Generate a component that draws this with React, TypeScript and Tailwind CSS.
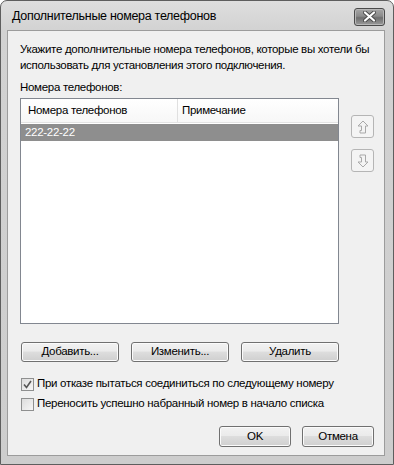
const font = { fontFamily: '"Liberation Sans", Arial, sans-serif' };
const txt = "text-[11.5px] tracking-[-0.3px] whitespace-nowrap";

function ArrowUp() {
  return (
    <svg width="12" height="14" viewBox="0 0 12 14" fill="none">
      <path d="M6 1 L11 6 L8.5 6 L8.5 13 L3 13 L3 10.5 L4.5 10.5 L4.5 6 L1 6 Z" stroke="#a9a9a9" strokeWidth="1" strokeLinejoin="miter" />
    </svg>
  );
}

function ArrowDown() {
  return (
    <svg width="12" height="14" viewBox="0 0 12 14" fill="none">
      <path d="M6 13 L11 8 L8.5 8 L8.5 1 L3 1 L3 3.5 L4.5 3.5 L4.5 8 L1 8 Z" stroke="#a9a9a9" strokeWidth="1" strokeLinejoin="miter" />
    </svg>
  );
}

function Btn({ label, w }: { label: string; w: string }) {
  return (
    <div
      className={`${w} ${txt} flex items-center justify-center rounded-[3px] border border-[#707070] text-black shadow-[inset_0_0_0_1px_#fbfbfb]`}
      style={{ background: "linear-gradient(#f2f2f2 0%, #ebebeb 45%, #dddddd 50%, #cfcfcf 100%)" }}
    >
      {label}
    </div>
  );
}

function Check({ checked, label }: { checked: boolean; label: string }) {
  return (
    <div className="flex h-[16px] items-center">
      <div
        className="ml-[1px] flex h-[13px] w-[13px] items-center justify-center border border-[#8e8f8f]"
        style={{ background: "linear-gradient(135deg, #dcdcdc, #f6f6f6)" }}
      >
        {checked ? (
          <svg width="9" height="9" viewBox="0 0 9 9">
            <path d="M1 4.5 L3.5 7.5 L8 1" stroke="#555" strokeWidth="1.6" fill="none" />
          </svg>
        ) : null}
      </div>
      <span className={`ml-[3px] ${txt} text-black`}>{label}</span>
    </div>
  );
}

export default function App() {
  return (
    <div className="h-[465px] w-[394px] bg-white" style={font}>
      <div
        className="flex h-[465px] w-[394px] flex-col rounded-t-[7px] border border-[#5e5e5e] pb-[8px] pl-[6px] pr-[8px]"
        style={{ background: "linear-gradient(#dedede 0px, #d2d2d2 30px, #cdcdcd 100%)" }}
      >
        <div className="flex h-[29px] items-center justify-between pl-[5px]">
          <span className="mt-[1px] whitespace-nowrap text-[12.5px] tracking-[-0.3px] text-black">Дополнительные номера телефонов</span>
          <div
            className="mt-[2px] flex h-[18px] w-[31px] items-center justify-center rounded-[3px] border border-[#4a4a4a] shadow-[inset_0_0_0_1px_#b8b8b8]"
            style={{ background: "linear-gradient(#a6a6a6 0%, #8a8a8a 45%, #6e6e6e 55%, #9a9a9a 100%)" }}
          >
            <svg width="13" height="11" viewBox="0 0 13 11">
              <path d="M2 1.5 L11 9.5 M11 1.5 L2 9.5" stroke="#4a4a4a" strokeWidth="4" strokeLinecap="round" />
              <path d="M2 1.5 L11 9.5 M11 1.5 L2 9.5" stroke="#ffffff" strokeWidth="2.2" strokeLinecap="round" />
            </svg>
          </div>
        </div>
        <div className="flex flex-1 flex-col border border-[#9c9c9c] bg-[#f0f0f0] pl-[12px] pt-[10px]">
          <p className={`${txt} leading-[16px] text-black`}>
            Укажите дополнительные номера телефонов, которые вы хотели бы
            <br />
            использовать для установления этого подключения.
          </p>
          <p className={`mt-[6px] ${txt} leading-[16px] text-black`}>Номера телефонов:</p>
          <div className="mt-[3px] flex">
            <div className="flex h-[226px] w-[319px] flex-col border border-[#828790] bg-white">
              <div className={`flex h-[24px] border-b border-[#e3e3e3] ${txt} text-black`} style={{ background: "linear-gradient(#ffffff, #f7f7f7)" }}>
                <div className="flex w-[157px] items-center border-r border-[#e0e0e0] pl-[7px]">Номера телефонов</div>
                <div className="flex items-center pl-[4px]">Примечание</div>
              </div>
              <div className={`mt-[1px] flex h-[17px] items-center bg-[#8e8e8e] pl-[4px] ${txt} text-white`}>222-22-22</div>
            </div>
            <div className="ml-[12px] flex flex-col gap-[11px] pt-[17px]">
              <div className="flex h-[23px] w-[23px] items-center justify-center rounded-[3px] border border-[#b5b5b5] bg-[#f4f4f4]">
                <ArrowUp />
              </div>
              <div className="flex h-[23px] w-[23px] items-center justify-center rounded-[3px] border border-[#b5b5b5] bg-[#f4f4f4]">
                <ArrowDown />
              </div>
            </div>
          </div>
          <div className="ml-[1px] mt-[18px] flex gap-[12px]">
            <Btn label="Добавить..." w="w-[98px] h-[20px]" />
            <Btn label="Изменить..." w="w-[98px] h-[20px]" />
            <Btn label="Удалить" w="w-[98px] h-[20px]" />
          </div>
          <div className="mt-[14px]">
            <Check checked label="При отказе пытаться соединиться по следующему номеру" />
          </div>
          <div className="mt-[4px]">
            <Check checked={false} label="Переносить успешно набранный номер в начало списка" />
          </div>
          <div className="mr-[10px] mt-[14px] flex justify-end gap-[11px]">
            <Btn label="OK" w="w-[72px] h-[21px]" />
            <Btn label="Отмена" w="w-[72px] h-[21px]" />
          </div>
        </div>
      </div>
    </div>
  );
}
